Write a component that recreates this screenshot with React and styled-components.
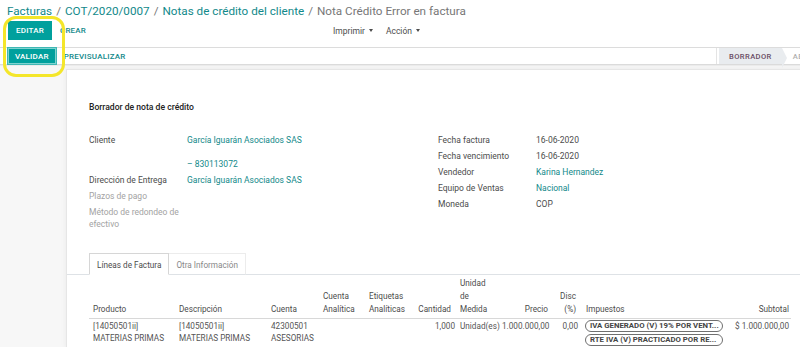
import React from "react";
import styled, { createGlobalStyle } from "styled-components";

const GlobalStyle = createGlobalStyle`
  html, body {
    margin: 0;
    padding: 0;
    background: #ffffff;
    overflow: hidden;
  }
  body {
    font-family: Roboto, "Noto Sans", "Liberation Sans", sans-serif;
    font-size: 8.5px;
    color: #4c4c4c;
  }
`;

const teal = "#00a09d";
const linkTeal = "#12898a";

const crumbs = [
  { text: "Facturas", link: true },
  { text: "COT/2020/0007", link: true },
  { text: "Notas de crédito del cliente", link: true },
  { text: "Nota Crédito Error en factura", link: false },
];

const leftFields = [
  { label: "Cliente", value: "García Iguarán Asociados SAS\n\n– 830113072", link: true },
  { label: "Dirección de Entrega", value: "García Iguarán Asociados SAS", link: true },
  { label: "Plazos de pago", empty: true },
  { label: "Método de redondeo de efectivo", empty: true },
];

const rightFields = [
  { label: "Fecha factura", value: "16-06-2020" },
  { label: "Fecha vencimiento", value: "16-06-2020" },
  { label: "Vendedor", value: "Karina Hernandez", link: true },
  { label: "Equipo de Ventas", value: "Nacional", link: true },
  { label: "Moneda", value: "COP" },
];

// widths add up to the table width (702px); hpr/hpl = header padding when it differs
const columns = [
  { key: "producto", title: "Producto", width: 88, pl: 4 },
  { key: "descripcion", title: "Descripción", width: 92 },
  { key: "cuenta", title: "Cuenta", width: 52 },
  { key: "analitica", title: "Cuenta\nAnalítica", width: 46 },
  { key: "etiquetas", title: "Etiquetas\nAnalíticas", width: 46 },
  { key: "cantidad", title: "Cantidad", width: 44, right: true, hpr: 6 },
  { key: "unidad", title: "Unidad\nde\nMedida", width: 43, pl: 3 },
  { key: "precio", title: "Precio", width: 53, right: true, pr: 4, hpr: 5 },
  { key: "disc", title: "Disc\n(%)", width: 27, right: true, hpr: 4 },
  { key: "impuestos", title: "Impuestos", width: 149, pl: 5, hpl: 6 },
  { key: "subtotal", title: "Subtotal", width: 62, right: true },
];

const line = {
  producto: "[14050501ii]\nMATERIAS PRIMAS",
  descripcion: "[14050501ii]\nMATERIAS PRIMAS",
  cuenta: "42300501\nASESORIAS",
  analitica: "",
  etiquetas: "",
  cantidad: "1,000",
  unidad: "Unidad(es)",
  precio: "1.000.000,00",
  disc: "0,00",
  impuestos: ["IVA GENERADO (V) 19% POR VENT...", "RTE IVA (V) PRACTICADO POR RE..."],
  subtotal: "$ 1.000.000,00",
};

const App = () => {
  return (
    <Page>
      <GlobalStyle />
      <ControlPanel>
        <Breadcrumb>
          {crumbs.map((c, i) => (
            <React.Fragment key={c.text}>
              {i > 0 && <Separator>/</Separator>}
              <Crumb $link={c.link}>{c.text}</Crumb>
            </React.Fragment>
          ))}
        </Breadcrumb>
        <ButtonRow>
          <Buttons>
            <PrimaryButton>Editar</PrimaryButton>
            <LinkButton>Crear</LinkButton>
          </Buttons>
          <Sidebar>
            <Dropdown>Imprimir</Dropdown>
            <Dropdown>Acción</Dropdown>
          </Sidebar>
        </ButtonRow>
      </ControlPanel>

      <StatusBar>
        <Buttons>
          <PrimaryButton $focused>Validar</PrimaryButton>
          <LinkButton>Previsualizar</LinkButton>
        </Buttons>
        <Stages>
          <Stage $active>Borrador</Stage>
          <Stage>Abierto</Stage>
        </Stages>
      </StatusBar>

      <SheetBg>
        <Sheet>
          <Title>Borrador de nota de crédito</Title>
          <Groups>
            <FieldGroup>
              {leftFields.map((f) => (
                <FieldRow key={f.label}>
                  <Label $empty={f.empty}>{f.label}</Label>
                  <Value $link={f.link}>{f.value}</Value>
                </FieldRow>
              ))}
            </FieldGroup>
            <FieldGroup>
              {rightFields.map((f) => (
                <FieldRow key={f.label}>
                  <Label>{f.label}</Label>
                  <Value $link={f.link}>{f.value}</Value>
                </FieldRow>
              ))}
            </FieldGroup>
          </Groups>

          <Tabs>
            <Tab $active>Líneas de Factura</Tab>
            <Tab>Otra Información</Tab>
          </Tabs>

          <LinesTable>
            <colgroup>
              {columns.map((c) => (
                <col key={c.key} style={{ width: c.width }} />
              ))}
            </colgroup>
            <thead>
              <tr>
                {columns.map((c) => (
                  <Th
                    key={c.key}
                    $right={c.right}
                    $pl={c.hpl ?? c.pl}
                    $pr={c.hpr ?? c.pr}
                  >
                    {c.title}
                  </Th>
                ))}
              </tr>
            </thead>
            <tbody>
              <tr>
                {columns.map((c) => (
                  <Td key={c.key} $right={c.right} $pl={c.pl} $pr={c.pr}>
                    {c.key === "impuestos" ? (
                      <TagList>
                        {line.impuestos.map((t) => (
                          <Tag key={t}>{t}</Tag>
                        ))}
                      </TagList>
                    ) : (
                      line[c.key]
                    )}
                  </Td>
                ))}
              </tr>
            </tbody>
          </LinesTable>
        </Sheet>
      </SheetBg>

      <Highlight />
    </Page>
  );
};

export default App;

const Page = styled.div`
  position: relative;
  width: 800px;
  height: 347px;
  overflow: hidden;
  display: flex;
  flex-direction: column;
`;

const ControlPanel = styled.div`
  padding: 1px 0 7px 8px;
  background: #ffffff;
`;

const Breadcrumb = styled.div`
  display: flex;
  align-items: center;
  height: 19px;
  margin-left: -1px;
  font-size: 11.7px;
  white-space: nowrap;
`;

const Crumb = styled.span`
  color: ${(p) => (p.$link ? linkTeal : "#777777")};
`;

const Separator = styled.span`
  color: #777777;
  padding: 0 4px;
`;

const ButtonRow = styled.div`
  display: grid;
  grid-template-columns: 325px auto;
  align-items: center;
  margin-top: 1px;
  height: 19px;
`;

const Buttons = styled.div`
  display: flex;
  align-items: center;
`;

const PrimaryButton = styled.button`
  height: ${(p) => (p.$focused ? "16px" : "19px")};
  padding: 0 ${(p) => (p.$focused ? "6px" : "7px")};
  border: 1px solid ${(p) => (p.$focused ? "#7fd3d0" : teal)};
  ${(p) => p.$focused && "box-shadow: 0 0 0 1px #3fb7b4;"}
  background: ${teal};
  color: #ffffff;
  font-family: inherit;
  font-size: 8px;
  font-weight: 500;
  letter-spacing: 0.2px;
  text-transform: uppercase;
  border-radius: 0;
`;

const LinkButton = styled.button`
  border: none;
  background: transparent;
  padding: 0 0 0 8px;
  color: ${linkTeal};
  font-family: inherit;
  font-size: 8px;
  font-weight: 500;
  letter-spacing: 0.2px;
  text-transform: uppercase;
`;

const Sidebar = styled.div`
  display: flex;
  align-items: center;
  gap: 13px;
`;

const Dropdown = styled.span`
  color: #4c4c4c;
  font-size: 8.5px;
  &::after {
    content: "";
    display: inline-block;
    margin-left: 4px;
    vertical-align: 2px;
    border-top: 3px solid #4c4c4c;
    border-left: 2.5px solid transparent;
    border-right: 2.5px solid transparent;
  }
`;

const StatusBar = styled.div`
  display: grid;
  grid-template-columns: 708px auto;
  align-items: stretch;
  height: 21px;
  padding-left: 8px;
  border-top: 1px solid #dcdcdc;
  border-bottom: 1px solid #dcdcdc;
  background: #ffffff;
`;

const Stages = styled.div`
  display: flex;
  align-items: stretch;
  border-left: 1px solid #e4e4e4;
  padding-left: 2px;
  white-space: nowrap;
`;

const Stage = styled.span`
  position: relative;
  display: flex;
  align-items: center;
  padding: 0 10px 0 ${(p) => (p.$active ? "10px" : "11px")};
  background: ${(p) => (p.$active ? "#e9ecef" : "transparent")};
  color: ${(p) => (p.$active ? "#6a4d64" : "#b0b0b0")};
  font-size: 7.6px;
  font-weight: 500;
  letter-spacing: 0.4px;
  text-transform: uppercase;
  ${(p) =>
    p.$active &&
    `
    &::after {
      content: "";
      position: absolute;
      right: -5px;
      top: 0;
      border-left: 5px solid #e9ecef;
      border-top: 10.5px solid transparent;
      border-bottom: 10.5px solid transparent;
    }
  `}
`;

const SheetBg = styled.div`
  flex: 1;
  display: flex;
  padding: 3px 0 0 66px;
  background: #f7f7f7;
  border-top: 1px solid #ececec;
`;

const Sheet = styled.div`
  flex: 1;
  margin-right: -20px;
  padding: 31px 0 0 22px;
  background: #ffffff;
  border: 1px solid #e6e6e6;
  box-shadow: 0 0 6px rgba(0, 0, 0, 0.06);
`;

const Title = styled.div`
  line-height: 12px;
  font-size: 8.6px;
  font-weight: 500;
  color: #222222;
`;

const Groups = styled.div`
  display: grid;
  grid-template-columns: 349px 1fr;
  margin-top: 21px;
`;

const FieldGroup = styled.div`
  display: flex;
  flex-direction: column;
  gap: 4px;
`;

const FieldRow = styled.div`
  display: grid;
  grid-template-columns: 98px 1fr;
  line-height: 12px;
`;

const Label = styled.div`
  padding-right: 6px;
  color: ${(p) => (p.$empty ? "#a3a3a3" : "#4c4c4c")};
`;

const Value = styled.div`
  white-space: pre-line;
  color: ${(p) => (p.$link ? linkTeal : "#4c4c4c")};
`;

const Tabs = styled.div`
  display: flex;
  margin: 23px 0 0 -22px;
  padding-left: 22px;
  border-bottom: 1px solid #dee2e6;
`;

const Tab = styled.div`
  height: 19px;
  padding: 1px 7px 0;
  margin-bottom: -1px;
  display: flex;
  align-items: center;
  box-sizing: content-box;
  background: #ffffff;
  border: 1px solid ${(p) => (p.$active ? "#d6d6d6" : "#ececec")};
  border-bottom-color: ${(p) => (p.$active ? "#ffffff" : "#dee2e6")};
  ${(p) => !p.$active && "border-left: none;"}
  color: ${(p) => (p.$active ? "#4c4c4c" : "#888888")};
  font-size: 8.2px;
`;

const LinesTable = styled.table`
  table-layout: fixed;
  width: 702px;
  border-collapse: collapse;
  margin-top: 2px;
`;

const Th = styled.th`
  vertical-align: bottom;
  white-space: pre-line;
  text-align: ${(p) => (p.$right ? "right" : "left")};
  padding: 0 ${(p) => (p.$pr ?? 2)}px 2px ${(p) => (p.$pl ?? 2)}px;
  line-height: 13px;
  font-size: 8.2px;
  font-weight: 400;
  color: #4c4c4c;
  border-bottom: 1px solid #d8d8d8;
`;

const Td = styled.td`
  vertical-align: top;
  white-space: pre;
  text-align: ${(p) => (p.$right ? "right" : "left")};
  padding: 1px ${(p) => (p.$pr ?? 2)}px 1px ${(p) => (p.$pl ?? 2)}px;
  line-height: 12px;
  font-size: 8.2px;
  color: #555555;
  border-bottom: 1px solid #e2e2e2;
  overflow: hidden;
`;

const TagList = styled.div`
  display: flex;
  flex-direction: column;
  align-items: flex-start;
  gap: 2px;
`;

const Tag = styled.span`
  display: inline-block;
  width: 128px;
  padding: 0 4px;
  line-height: 10px;
  border: 1px solid #6f6f6f;
  border-radius: 6px;
  font-size: 7.8px;
  font-weight: 700;
  color: #444444;
  white-space: nowrap;
  overflow: hidden;
`;

const Highlight = styled.div`
  position: absolute;
  left: 3px;
  top: 16px;
  width: 56px;
  height: 55px;
  border: 3px solid #f4e62a;
  border-radius: 13px;
  pointer-events: none;
`;
